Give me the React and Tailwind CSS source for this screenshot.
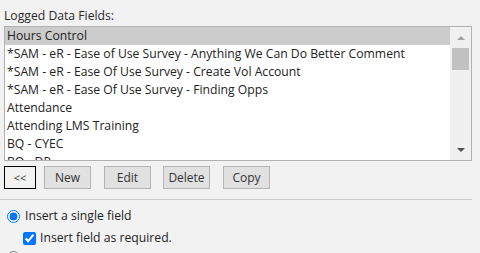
import React from "react";

const fields = [
  "Hours Control",
  "*SAM - eR - Ease of Use Survey - Anything We Can Do Better Comment",
  "*SAM - eR - Ease Of Use Survey - Create Vol Account",
  "*SAM - eR - Ease Of Use Survey - Finding Opps",
  "Attendance",
  "Attending LMS Training",
  "BQ - CYEC",
  "BQ - DP",
];

function ActionButton({ label, className }) {
  return (
    <button
      className={
        "h-[23px] w-[47px] border border-[#b4b4b4] bg-[#e1e1e1] text-[12px] text-[#333] leading-none " +
        className
      }
    >
      {label}
    </button>
  );
}

export default function App() {
  return (
    <div className="w-[480px] h-[253px] overflow-hidden bg-[#f2f2f2] font-['Open_Sans',sans-serif] text-[12.2px] text-[#333]">
      <div className="pl-[4px] pt-[7px]">
        <div className="h-[17px] leading-[17px] mb-[2px] text-[#2a2a2a]">Logged Data Fields:</div>

        <div className="w-[468px] h-[135px] border border-[#b1b1b1] bg-white flex">
          <ul className="flex-1 overflow-hidden">
            {fields.map((f, i) => (
              <li
                key={i}
                className={
                  "h-[18px] leading-[18px] pl-[2px] whitespace-nowrap " +
                  (i === 0 ? "bg-[#cccccc] text-[#222]" : "text-[#222]")
                }
              >
                {f}
              </li>
            ))}
          </ul>
          <div className="w-[21px] bg-[#f0f0f0] flex flex-col items-center">
            <div className="h-[21px] flex items-center justify-center">
              <span className="block w-0 h-0 border-l-[4px] border-r-[4px] border-b-[4px] border-l-transparent border-r-transparent border-b-[#a3a3a3]" />
            </div>
            <div className="w-[17px] h-[22px] bg-[#c1c1c1]" />
            <div className="flex-1" />
            <div className="h-[21px] flex items-center justify-center">
              <span className="block w-0 h-0 border-l-[4px] border-r-[4px] border-t-[4px] border-l-transparent border-r-transparent border-t-[#505050]" />
            </div>
          </div>
        </div>

        <div className="flex mt-[5px]">
          <button className="h-[23px] w-[32px] border border-black bg-[#f2f2f2] text-[11px] text-[#333] leading-none">
            &lt;&lt;
          </button>
          <ActionButton label="New" className="ml-[8px]" />
          <ActionButton label="Edit" className="ml-[13px]" />
          <ActionButton label="Delete" className="ml-[12px]" />
          <ActionButton label="Copy" className="ml-[13px]" />
        </div>
      </div>

      <div className="w-[472px] h-[1px] bg-[#c8c8c8] mt-[10px]" />

      <label className="flex items-center h-[18px] mt-[7px] pl-[7px]">
        <input type="radio" name="mode" defaultChecked className="m-0 w-[13px] h-[13px]" />
        <span className="ml-[5px] text-[#222]">Insert a single field</span>
      </label>
      <label className="flex items-center h-[18px] mt-[4px] pl-[23px]">
        <input type="checkbox" defaultChecked className="m-0 w-[13px] h-[13px]" />
        <span className="ml-[4px] text-[#222]">Insert field as required.</span>
      </label>
      <div className="flex items-start h-[18px] mt-[4px] pl-[7px]">
        <input type="radio" name="mode" className="m-0 w-[13px] h-[13px]" />
      </div>
    </div>
  );
}
